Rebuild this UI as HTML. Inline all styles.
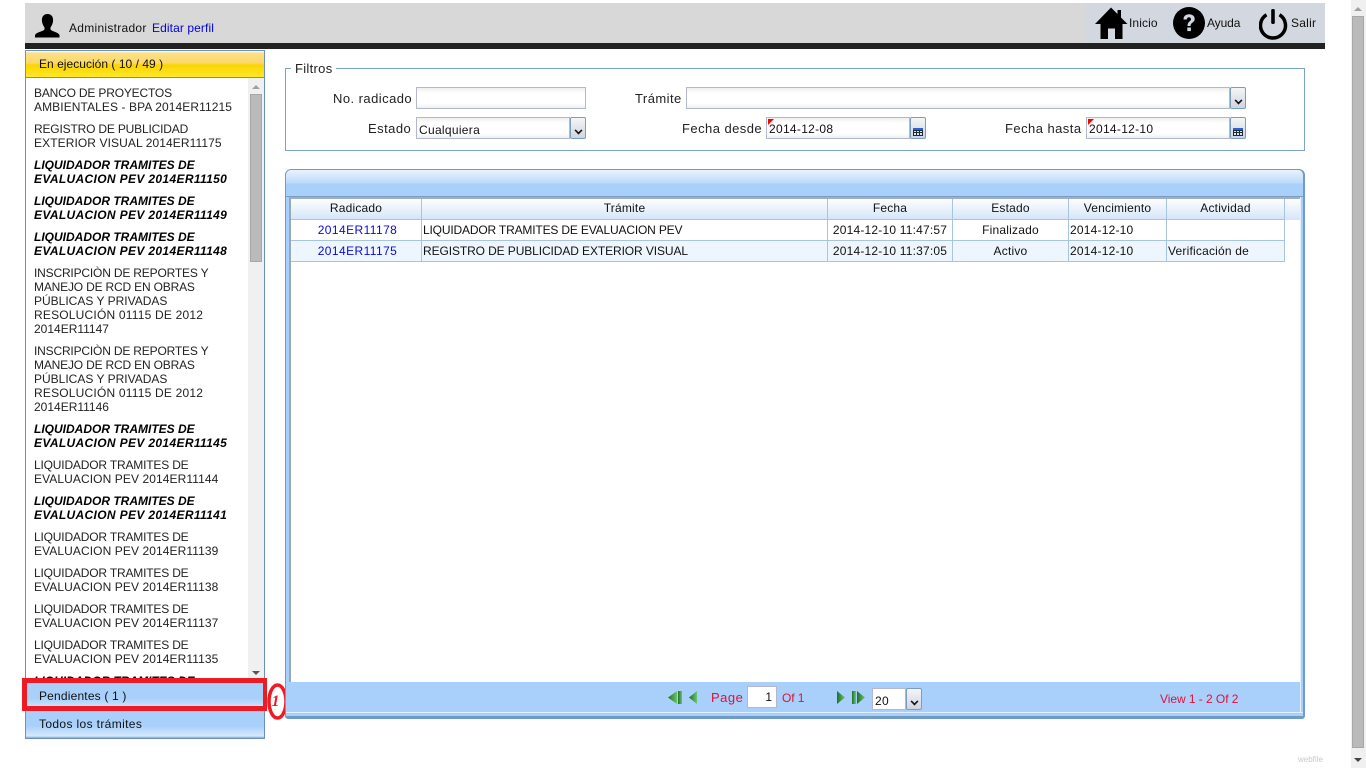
<!DOCTYPE html>
<html><head><meta charset="utf-8"><style>
html,body{margin:0;padding:0;width:1366px;height:768px;overflow:hidden;background:#fff;font-family:"Liberation Sans",sans-serif;font-size:12px;color:#111}
div,span,svg{position:absolute;box-sizing:border-box}
em{font-style:inherit}
em.n{letter-spacing:-.18px}
em.w{letter-spacing:.09px}
em.r{letter-spacing:.2px}
em.x{letter-spacing:.35px}
.t{white-space:nowrap;line-height:14px}
.l{font-size:13px;letter-spacing:.45px;white-space:nowrap;line-height:16px;text-align:right;color:#222}
.inp{height:22px;border:1px solid #b4b8cc;background:linear-gradient(#f0f0f0,#fff 5px,#fff 15px,#eef0f0);font-size:12px;line-height:22px;padding-left:2px;white-space:nowrap;letter-spacing:.3px}
.btn{width:16px;height:22px;border:1px solid #7b9ebd;border-radius:2px;background:linear-gradient(#f4f5f8,#cfd5df)}
.btn:after{content:"";position:absolute;left:4px;top:9px;width:5px;height:5px;border:solid #111;border-width:0 2px 2px 0;transform:rotate(45deg) scale(.8)}
.cal{width:16px;height:22px;border:1px solid #7b9ebd;border-radius:2px;background:linear-gradient(#f4f5f8,#cfd5df)}
.cal svg{left:2px;top:10px}
.tri{position:absolute;left:1px;top:1px;width:0;height:0;border-style:solid;border-width:6px 6px 0 0;border-color:#f00 transparent transparent transparent}
.item{width:215px;font-size:12px;line-height:14px;color:#222;white-space:nowrap}
.b{font-weight:bold;font-style:italic;color:#000}
.hd{top:199px;height:21px;background:linear-gradient(#fdfeff,#d5e6f8);border-right:1px solid #a9c4df;border-bottom:1px solid #a9c4df;text-align:center;line-height:19px;letter-spacing:.2px}
.c{height:21px;border-right:1px solid #a9c4df;border-bottom:1px solid #a9c4df;line-height:20px;white-space:nowrap;overflow:hidden;padding-left:1px;letter-spacing:.2px}
.cc{text-align:center;padding:0}
.rad{color:#0a0ad8;letter-spacing:.42px;padding-left:3px}
</style></head><body>

<!-- top bar -->
<div style="left:25px;top:3px;width:1300px;height:40px;background:#d8d8d8"></div>
<div style="left:1085px;top:3px;width:240px;height:40px;background:#d3d7e0"></div>
<div style="left:25px;top:43px;width:1300px;height:6px;background:#222"></div>
<svg style="left:35px;top:14px" width="25" height="24" viewBox="0 0 25 24"><path d="M12.500 0C8 0 6.500 3.500 7 7.500C7.300 10 8.500 12 9.500 13.500V15.500C8 17.500 1.500 18 0 21V23.500H24.500V21C23 18 17 17.500 15.500 15.500V13.500C16.500 12 17.700 10 18 7.500C18.500 3.500 17 0 12.500 0Z" fill="#000"/></svg>
<span class="t" style="left:69px;top:21px;letter-spacing:.28px">Administrador</span>
<span class="t" style="left:152px;top:21px;color:#0000e6;letter-spacing:.1px">Editar perfil</span>

<svg style="left:1095px;top:7px" width="33" height="33" viewBox="0 0 33 33"><path d="M16 0.500L0 17H5.500V32H13V21.500H20V32H27.500V17H32.500L26 10.500V3H22.500V7Z" fill="#000"/></svg>
<span class="t" style="left:1129px;top:16px;letter-spacing:.1px">Inicio</span>
<svg style="left:1173px;top:7px" width="32" height="32" viewBox="0 0 32 32"><circle cx="16" cy="16" r="16" fill="#000"/><path d="M10.500 12.500C10.500 9 13 7.300 16 7.300C19.500 7.300 21.700 9.300 21.700 12C21.700 15.500 17.500 15.500 17.500 19H14.500C14.500 14.500 18 14.500 18 12.300C18 11 17.200 10.200 16 10.200C14.700 10.200 14 11 13.800 12.500Z" fill="#d3d7e0"/><rect x="14.300" y="20.500" width="3.600" height="3.600" fill="#d3d7e0"/></svg>
<span class="t" style="left:1207px;top:16px;letter-spacing:-.1px">Ayuda</span>
<svg style="left:1259px;top:9px" width="29" height="31" viewBox="0 0 29 31"><path d="M7.500 5.800A12.500 12.500 0 1 0 20.500 5.800" fill="none" stroke="#000" stroke-width="3.500"/><rect x="12.200" y="0" width="3.600" height="15" rx="1.500" fill="#000"/></svg>
<span class="t" style="left:1291px;top:16px;letter-spacing:.25px">Salir</span>

<!-- sidebar -->
<div style="left:25px;top:50px;width:240px;height:689px;border:1px solid #6b92bd;background:#fff"></div>
<div style="left:26px;top:51px;width:238px;height:27px;background:linear-gradient(#fff 0,#fde08a 2px,#fbd968 12px,#fcd400 14px,#ffe92e 27px);border-bottom:1px solid #6b92bd"></div>
<span class="t" style="left:39px;top:57px;letter-spacing:.03px">En ejecución ( 10 / 49 )</span>

<div style="left:26px;top:78px;width:238px;height:600px;overflow:hidden">
<div class="item" style="left:8px;top:8px"><em class="n">BANCO DE PROYECTOS</em><br><em class="w">AMBIENTALES - BPA 2014ER11215</em></div>
<div class="item" style="left:8px;top:44px"><em class="n">REGISTRO DE PUBLICIDAD</em><br><em class="w">EXTERIOR VISUAL 2014ER11175</em></div>
<div class="item b" style="left:8px;top:80px">LIQUIDADOR TRAMITES DE<br><em class="x">EVALUACION PEV 2014ER11150</em></div>
<div class="item b" style="left:8px;top:116px">LIQUIDADOR TRAMITES DE<br><em class="x">EVALUACION PEV 2014ER11149</em></div>
<div class="item b" style="left:8px;top:152px">LIQUIDADOR TRAMITES DE<br><em class="x">EVALUACION PEV 2014ER11148</em></div>
<div class="item" style="left:8px;top:188px"><em class="n">INSCRIPCIÒN DE REPORTES Y</em><br><em class="n">MANEJO DE RCD EN OBRAS</em><br>PÚBLICAS Y PRIVADAS<br><em class="r">RESOLUCIÓN 01115 DE 2012</em><br>2014ER11147</div>
<div class="item" style="left:8px;top:266px"><em class="n">INSCRIPCIÒN DE REPORTES Y</em><br><em class="n">MANEJO DE RCD EN OBRAS</em><br>PÚBLICAS Y PRIVADAS<br><em class="r">RESOLUCIÓN 01115 DE 2012</em><br>2014ER11146</div>
<div class="item b" style="left:8px;top:344px">LIQUIDADOR TRAMITES DE<br><em class="x">EVALUACION PEV 2014ER11145</em></div>
<div class="item" style="left:8px;top:380px"><em class="n">LIQUIDADOR TRAMITES DE</em><br><em class="w">EVALUACION PEV 2014ER11144</em></div>
<div class="item b" style="left:8px;top:416px">LIQUIDADOR TRAMITES DE<br><em class="x">EVALUACION PEV 2014ER11141</em></div>
<div class="item" style="left:8px;top:452px"><em class="n">LIQUIDADOR TRAMITES DE</em><br><em class="w">EVALUACION PEV 2014ER11139</em></div>
<div class="item" style="left:8px;top:488px"><em class="n">LIQUIDADOR TRAMITES DE</em><br><em class="w">EVALUACION PEV 2014ER11138</em></div>
<div class="item" style="left:8px;top:524px"><em class="n">LIQUIDADOR TRAMITES DE</em><br><em class="w">EVALUACION PEV 2014ER11137</em></div>
<div class="item" style="left:8px;top:560px"><em class="n">LIQUIDADOR TRAMITES DE</em><br><em class="w">EVALUACION PEV 2014ER11135</em></div>
<div class="item b" style="left:8px;top:596px">LIQUIDADOR TRAMITES DE</div>
<!-- scrollbar -->
<div style="left:222px;top:0;width:16px;height:600px;background:#f0f0f0"></div>
<div style="left:224px;top:16px;width:12px;height:168px;background:#bababa;border:1px solid #a8a8a8"></div>
<div style="left:226px;top:7px;width:0;height:0;border:4px solid transparent;border-top:0;border-bottom:4px solid #a0a0a0"></div>
<div style="left:226px;top:593px;width:0;height:0;border:4px solid transparent;border-bottom:0;border-top:4px solid #555"></div>
</div>

<div style="left:26px;top:682px;width:238px;height:28px;background:linear-gradient(#a9d0fa,#a9d0fa 16px,#d6e9fd 28px)"></div>
<div style="left:26px;top:711px;width:238px;height:27px;background:linear-gradient(#a9d0fa,#a9d0fa 15px,#d6e9fd 25px,#7fa8d0 27px)"></div>
<span class="t" style="left:39px;top:689px;letter-spacing:.18px">Pendientes ( 1 )</span>
<span class="t" style="left:39px;top:717px;letter-spacing:.36px">Todos los trámites</span>
<div style="left:22px;top:678px;width:245px;height:33px;border:solid #ed1c24;border-width:5px 4px 5px 5px"></div>
<svg style="left:265px;top:681px" width="25" height="41" viewBox="0 0 25 41"><ellipse cx="12.500" cy="20.500" rx="8.500" ry="16.500" fill="#fff" stroke="#ed1c24" stroke-width="3.500"/><text x="10.500" y="25" font-family="Liberation Serif,serif" font-style="italic" font-weight="bold" font-size="16" fill="#ed1c24" text-anchor="middle">1</text></svg>

<!-- filtros -->
<div style="left:285px;top:68px;width:1020px;height:83px;border:1px solid #7aa4cf"></div>
<div class="t" style="left:291px;top:62px;width:45px;background:#fff;padding-left:4px;font-size:13px;letter-spacing:.3px;color:#222">Filtros</div>
<span class="l" style="left:333px;top:91px">No. radicado</span>
<div class="inp" style="left:416px;top:87px;width:170px"></div>
<span class="l" style="left:635px;top:91px">Trámite</span>
<div class="inp" style="left:686px;top:87px;width:544px"></div><div class="btn" style="left:1230px;top:87px"></div>
<span class="l" style="left:368px;top:121px">Estado</span>
<div class="inp" style="left:416px;top:117px;width:154px;line-height:24px">Cualquiera</div><div class="btn" style="left:570px;top:117px"></div>
<span class="l" style="left:682px;top:121px">Fecha desde</span>
<div class="inp" style="left:766px;top:117px;width:144px">2014-12-08<span class="tri"></span></div><div class="cal" style="left:910px;top:117px"><svg width="10" height="8" viewBox="0 0 10 8"><rect width="10" height="8" fill="#1d2a3a"/><rect width="10" height="2" fill="#2a62d8"/><path d="M1 3H3V4H1ZM4 3H6V4H4ZM7 3H9V4H7ZM1 5H3V7H1ZM4 5H6V7H4ZM7 5H9V7H7Z" fill="#d8e4f2"/></svg></div>
<span class="l" style="left:1005px;top:121px">Fecha hasta</span>
<div class="inp" style="left:1086px;top:117px;width:144px">2014-12-10<span class="tri"></span></div><div class="cal" style="left:1230px;top:117px"><svg width="10" height="8" viewBox="0 0 10 8"><rect width="10" height="8" fill="#1d2a3a"/><rect width="10" height="2" fill="#2a62d8"/><path d="M1 3H3V4H1ZM4 3H6V4H4ZM7 3H9V4H7ZM1 5H3V7H1ZM4 5H6V7H4ZM7 5H9V7H7Z" fill="#d8e4f2"/></svg></div>

<!-- grid panel -->
<div style="left:285px;top:169px;width:1020px;height:550px;border:1px solid #6f9bc8;border-radius:6px 6px 3px 3px;border-right:2px solid #6f9bc8;border-bottom:3px solid #6f9bc8;background:#a9d0fa"></div>
<div style="left:286px;top:170px;width:1017px;height:26px;background:linear-gradient(#eaf3fd,#bcdafb 13px,#a9d0fa 14px,#a9d0fa);border-radius:5px 5px 0 0"></div>
<div style="left:286px;top:196px;width:1017px;height:1px;background:#7a9cc0"></div>
<div style="left:289px;top:197px;width:1011px;height:485px;background:#fff;border-left:2px solid #9aa7b5;border-top:2px solid #9fb0c0"></div>
<div style="left:1300px;top:197px;width:1px;height:516px;background:#e2effd"></div>
<div style="left:286px;top:712px;width:1017px;height:1px;background:#e2effd"></div>
<div style="left:291px;top:199px;width:1009px;height:21px;background:linear-gradient(#fdfeff,#d5e6f8)"></div>
<div class="hd" style="left:291px;width:131px">Radicado</div>
<div class="hd" style="left:422px;width:406px">Trámite</div>
<div class="hd" style="left:828px;width:125px">Fecha</div>
<div class="hd" style="left:953px;width:116px">Estado</div>
<div class="hd" style="left:1069px;width:98px">Vencimiento</div>
<div class="hd" style="left:1167px;width:118px">Actividad</div>

<div style="left:291px;top:241px;width:994px;height:21px;background:#edf6fd"></div>
<div class="c cc rad" style="left:291px;top:220px;width:131px">2014ER11178</div>
<div class="c" style="left:422px;top:220px;width:406px;letter-spacing:-.17px">LIQUIDADOR TRAMITES DE EVALUACION PEV</div>
<div class="c cc" style="left:828px;top:220px;width:125px">2014-12-10 11:47:57</div>
<div class="c cc" style="left:953px;top:220px;width:116px">Finalizado</div>
<div class="c" style="left:1069px;top:220px;width:98px">2014-12-10</div>
<div class="c" style="left:1167px;top:220px;width:118px"></div>
<div class="c cc rad" style="left:291px;top:241px;width:131px">2014ER11175</div>
<div class="c" style="left:422px;top:241px;width:406px;letter-spacing:-.1px">REGISTRO DE PUBLICIDAD EXTERIOR VISUAL</div>
<div class="c cc" style="left:828px;top:241px;width:125px">2014-12-10 11:37:05</div>
<div class="c cc" style="left:953px;top:241px;width:116px">Activo</div>
<div class="c" style="left:1069px;top:241px;width:98px">2014-12-10</div>
<div class="c" style="left:1167px;top:241px;width:118px">Verificación de</div>

<!-- pager -->
<svg style="left:667px;top:690px" width="32" height="16" viewBox="0 0 32 16"><defs><linearGradient id="g" x1="0" x2="1" y1="0" y2="0"><stop offset="0" stop-color="#1f6f2a"/><stop offset="1" stop-color="#6cc46c"/></linearGradient></defs><path d="M10 1L1 7.500L10 14Z" fill="url(#g)"/><rect x="11" y="1" width="4" height="13" fill="url(#g)"/><path d="M30 1L22 7.500L30 14Z" fill="url(#g)"/></svg>
<svg style="left:836px;top:690px" width="32" height="16" viewBox="0 0 32 16"><path d="M1 1L9 7.500L1 14Z" fill="url(#g)"/><rect x="16" y="1" width="4" height="13" fill="url(#g)"/><path d="M21 1L29 7.500L21 14Z" fill="url(#g)"/></svg>
<span class="t" style="left:711px;top:691px;color:#e0103c;font-size:13px;letter-spacing:.5px">Page</span>
<div style="left:747px;top:686px;width:30px;height:22px;background:#fff;border:1px solid #b4b8cc;text-align:right;padding-right:4px;line-height:20px">1</div>
<span class="t" style="left:782px;top:691px;color:#e0103c;letter-spacing:-.1px">Of 1</span>
<div class="inp" style="left:872px;top:688px;width:34px;line-height:24px;background:#fff">20</div><div class="btn" style="left:906px;top:688px"></div>
<span class="t" style="left:1160px;top:692px;color:#e0103c;letter-spacing:-.05px">View 1 - 2 Of 2</span>

<!-- page scrollbar -->
<div style="left:1351px;top:0;width:15px;height:768px;background:#f0f0f0"></div>
<div style="left:1352px;top:16px;width:12px;height:732px;background:#bababa;border:1px solid #a8a8a8"></div>
<div style="left:1354px;top:7px;width:0;height:0;border:4px solid transparent;border-top:0;border-bottom:4px solid #a0a0a0"></div>
<div style="left:1354px;top:758px;width:0;height:0;border:4px solid transparent;border-bottom:0;border-top:4px solid #444"></div>
<span class="t" style="left:1298px;top:753px;font-size:8px;color:#c8c8c8">webfile</span>
</body></html>
